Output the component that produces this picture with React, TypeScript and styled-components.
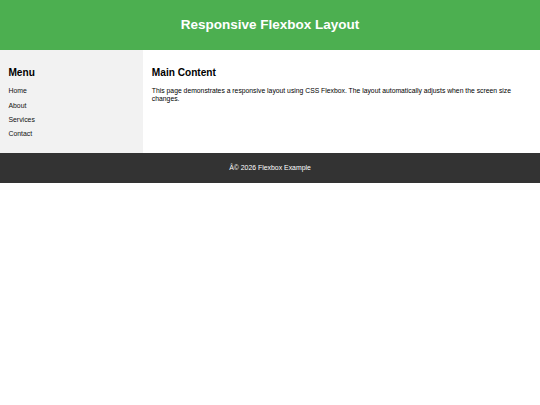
import React from 'react'
import styled, { createGlobalStyle } from 'styled-components'

const GlobalStyle = createGlobalStyle`
  body {
    margin: 0;
    font-family: 'Liberation Sans', Arial, Helvetica, sans-serif;
    background: #ffffff;
    color: #000000;
  }
`

const Header = styled.header`
  background-color: #4caf50;
  color: #ffffff;
  text-align: center;
  padding: 8.44px;

  h1 {
    margin: 9.05px 0;
    font-size: 13.5px;
    line-height: 15.5px;
    font-weight: 700;
  }
`

const Container = styled.div`
  display: flex;
`

const Sidebar = styled.aside`
  flex: 0 0 126.56px;
  padding: 8.44px;
  background-color: #f2f2f2;
`

const SectionTitle = styled.h2`
  margin: 8.4px 0;
  font-size: 10.125px;
  line-height: 11.63px;
  font-weight: 700;
`

const NavList = styled.ul`
  list-style: none;
  margin: 8.4px 0 6.75px;
  padding: 0;
`

const NavItem = styled.li`
  font-size: 6.9px;
  line-height: 7.76px;
  margin-bottom: 6.45px;

  &:last-child {
    margin-bottom: 0;
  }

  a {
    color: #111111;
    text-decoration: none;
  }
`

const Main = styled.main`
  flex: 1;
  padding: 8.44px;

  p {
    margin: 8.4px 0;
    font-size: 6.8px;
    line-height: 7.9px;
  }
`

const Footer = styled.footer`
  background-color: #333333;
  color: #ffffff;
  text-align: center;
  padding: 4.22px;

  p {
    margin: 6.75px 0;
    font-size: 6.9px;
    line-height: 7.76px;
  }
`

const links = ['Home', 'About', 'Services', 'Contact']

const App: React.FC = () => {
  return (
    <>
      <GlobalStyle />
      <Header>
        <h1>Responsive Flexbox Layout</h1>
      </Header>
      <Container>
        <Sidebar>
          <SectionTitle>Menu</SectionTitle>
          <NavList>
            {links.map((link) => (
              <NavItem key={link}>
                <a href="#">{link}</a>
              </NavItem>
            ))}
          </NavList>
        </Sidebar>
        <Main>
          <SectionTitle>Main Content</SectionTitle>
          <p>
            This page demonstrates a responsive layout using CSS Flexbox. The layout automatically adjusts when the
            screen size changes.
          </p>
        </Main>
      </Container>
      <Footer>
        <p>Â© 2026 Flexbox Example</p>
      </Footer>
    </>
  )
}

export default App
